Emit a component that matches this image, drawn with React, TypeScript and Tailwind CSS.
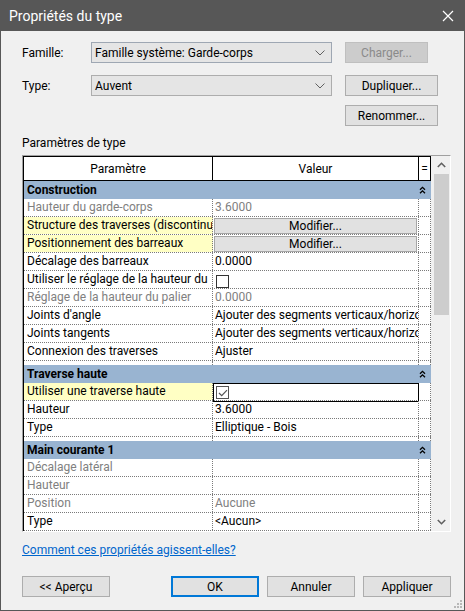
import React from "react";

type Kind = "text" | "button" | "check" | "checked";
type Row = { label: string; value?: string; kind?: Kind; gray?: boolean; yellow?: boolean };

const groups: { title: string; rows: Row[] }[] = [
  {
    title: "Construction",
    rows: [
      { label: "Hauteur du garde-corps", value: "3.6000", gray: true },
      { label: "Structure des traverses (discontinu", kind: "button", yellow: true },
      { label: "Positionnement des barreaux", kind: "button", yellow: true },
      { label: "Décalage des barreaux", value: "0.0000" },
      { label: "Utiliser le réglage de la hauteur du", kind: "check" },
      { label: "Réglage de la hauteur du palier", value: "0.0000", gray: true },
      { label: "Joints d'angle", value: "Ajouter des segments verticaux/horizontaux" },
      { label: "Joints tangents", value: "Ajouter des segments verticaux/horizontaux" },
      { label: "Connexion des traverses", value: "Ajuster" },
    ],
  },
  {
    title: "Traverse haute",
    rows: [
      { label: "Utiliser une traverse haute", kind: "checked", yellow: true },
      { label: "Hauteur", value: "3.6000" },
      { label: "Type", value: "Elliptique - Bois" },
    ],
  },
  {
    title: "Main courante 1",
    rows: [
      { label: "Décalage latéral", value: "", gray: true },
      { label: "Hauteur", value: "", gray: true },
      { label: "Position", value: "Aucune", gray: true },
      { label: "Type", value: "<Aucun>" },
    ],
  },
];

function DoubleUp() {
  return (
    <svg width="7" height="8" viewBox="0 0 7 8" className="shrink-0">
      <path d="M1 3.8 L3.5 1.3 L6 3.8" fill="none" stroke="#000" strokeWidth="1.3" />
      <path d="M1 7.3 L3.5 4.8 L6 7.3" fill="none" stroke="#000" strokeWidth="1.3" />
    </svg>
  );
}

function SelectChevron() {
  return (
    <svg width="10" height="6" viewBox="0 0 10 6">
      <path d="M0.5 0.5 L5 5 L9.5 0.5" fill="none" stroke="#606060" strokeWidth="1" />
    </svg>
  );
}

function Cells({ row }: { row: Row }) {
  const txt = row.gray ? "text-[#808080]" : "text-black";
  return (
    <>
      <div
        className={`w-[189px] shrink-0 border-r border-dotted border-[#7a7a7a] pl-[3px] overflow-hidden whitespace-nowrap ${
          row.yellow ? "bg-[#ffffc4]" : ""
        } ${txt}`}
      >
        {row.label}
      </div>
      <div className={`w-[206px] shrink-0 border-r border-dotted border-[#7a7a7a] overflow-hidden whitespace-nowrap ${txt}`}>
        {row.kind === "button" ? (
          <div className="mx-[1px] mt-[1px] h-[16px] border border-[#a6a6a6] bg-[#e1e1e1] flex items-center justify-center leading-none text-black">
            Modifier...
          </div>
        ) : row.kind === "check" ? (
          <div className="ml-[3px] mt-[4px] w-[13px] h-[13px] border border-[#333] bg-white" />
        ) : row.kind === "checked" ? (
          <div className="ml-[3px] mt-[3px] w-[13px] h-[13px] border border-[#555] bg-white flex items-center justify-center">
            <svg width="10" height="8" viewBox="0 0 10 8">
              <path d="M1 4 L3.7 6.6 L9 1.2" fill="none" stroke="#555" strokeWidth="1.2" />
            </svg>
          </div>
        ) : (
          <div className="pl-[2px]">{row.value}</div>
        )}
      </div>
      <div className="w-[12px] shrink-0 border-r border-dotted border-[#7a7a7a]" />
      {row.kind === "checked" && (
        <div className="absolute left-[189px] top-0 w-[206px] h-[19px] border-[1.5px] border-black pointer-events-none" />
      )}
    </>
  );
}

function GroupBar({ title }: { title: string }) {
  return (
    <div className="h-[18px] bg-[#99b4d1] flex items-center font-bold text-black pl-[3px] shrink-0">
      <div className="w-[392px] leading-[18px] whitespace-nowrap">{title}</div>
      <DoubleUp />
    </div>
  );
}

function Btn({ children, w, cls = "" }: { children: React.ReactNode; w: string; cls?: string }) {
  return (
    <div className={`${w} h-[21px] flex items-center justify-center border border-[#adadad] bg-[#e1e1e1] text-black ${cls}`}>
      {children}
    </div>
  );
}

export default function App() {
  return (
    <div className="w-[465px] h-[611px] border border-[#575757] bg-[#f0f0f0] flex flex-col text-[12px] font-['Roboto',sans-serif] text-black select-none overflow-hidden">
      {/* Title bar */}
      <div className="h-[30px] bg-[#575757] flex items-center justify-between pl-[8px] pr-[10px] shrink-0">
        <span className="text-white text-[14px] leading-none">Propriétés du type</span>
        <svg width="12" height="12" viewBox="0 0 12 12">
          <path d="M1 1 L11 11 M11 1 L1 11" stroke="#fff" strokeWidth="1.2" />
        </svg>
      </div>

      <div className="flex flex-col pl-[21px] pt-[11px]">
        {/* Famille */}
        <div className="flex items-center h-[21px]">
          <div className="w-[69px]">Famille:</div>
          <div className="w-[241px] h-[21px] border border-[#9ea7b3] bg-[#e5e5e5] flex items-center justify-between pl-[3px] pr-[6px]">
            <span>Famille système: Garde-corps</span>
            <SelectChevron />
          </div>
          <div className="ml-[13px] w-[83px] h-[21px] border border-[#bfbfbf] bg-[#cccccc] text-[#8a8a8a] flex items-center justify-center">
            Charger...
          </div>
        </div>
        {/* Type */}
        <div className="flex items-center h-[21px] mt-[12px]">
          <div className="w-[69px]">Type:</div>
          <div className="w-[241px] h-[21px] border border-[#adadad] bg-[#e5e5e5] flex items-center justify-between pl-[3px] pr-[6px]">
            <span>Auvent</span>
            <SelectChevron />
          </div>
          <Btn w="w-[93px]" cls="ml-[13px]">Dupliquer...</Btn>
        </div>
        <div className="flex h-[21px] mt-[9px] pl-[323px]">
          <Btn w="w-[93px]">Renommer...</Btn>
        </div>

        <div className="mt-[9px] h-[16px] leading-[16px]">Paramètres de type</div>

        {/* Table */}
        <div className="mt-[4px] w-[429px] h-[377px] border-t border-l border-[#a0a0a0] border-b border-r border-b-white border-r-white flex">
          <div className="w-[408px] h-[375px] bg-white border-l border-black flex flex-col overflow-hidden">
            {/* Header */}
            <div className="h-[25px] shrink-0 border-t border-b border-black flex">
              <div className="w-[189px] border-r border-black flex items-center justify-center">Paramètre</div>
              <div className="w-[206px] border-r border-black flex items-center justify-center">Valeur</div>
              <div className="w-[12px] border-r border-black flex items-center justify-center">=</div>
            </div>
            {groups.map((g, gi) => (
              <React.Fragment key={g.title}>
                {gi > 0 && (
                  <div className="h-[4px] shrink-0 flex">
                    <div className="w-[189px] border-r border-dotted border-[#7a7a7a]" />
                    <div className="w-[206px] border-r border-dotted border-[#7a7a7a]" />
                    <div className="w-[12px] border-r border-dotted border-[#7a7a7a]" />
                  </div>
                )}
                <GroupBar title={g.title} />
                {g.rows.map((r, ri) => (
                  <div key={ri} className="relative h-[18px] shrink-0 flex border-b border-dotted border-[#7a7a7a] leading-[17px]">
                    <Cells row={r} />
                  </div>
                ))}
              </React.Fragment>
            ))}
          </div>
          {/* Scrollbar */}
          <div className="w-[19px] h-[375px] bg-[#f0f0f0] flex flex-col items-center pl-[1px]">
            <div className="h-[18px] w-full flex items-center justify-center">
              <svg width="9" height="6" viewBox="0 0 9 6">
                <path d="M0.8 5 L4.5 1.3 L8.2 5" fill="none" stroke="#606060" strokeWidth="1.6" />
              </svg>
            </div>
            <div className="w-[15px] h-[141px] bg-[#cdcdcd]" />
            <div className="flex-1" />
            <div className="h-[18px] w-full flex items-center justify-center">
              <svg width="9" height="6" viewBox="0 0 9 6">
                <path d="M0.8 1 L4.5 4.7 L8.2 1" fill="none" stroke="#606060" strokeWidth="1.6" />
              </svg>
            </div>
          </div>
        </div>

        <div className="mt-[10px] h-[16px] leading-[16px]">
          <span className="text-[#0066cc] underline">Comment ces propriétés agissent-elles?</span>
        </div>

        <div className="mt-[18px] flex items-center">
          <Btn w="w-[88px]">&lt;&lt; Aperçu</Btn>
          <div className="w-[61px]" />
          <div className="w-[88px] h-[21px] flex items-center justify-center border-2 border-[#0078d7] bg-[#e1e1e1]">OK</div>
          <Btn w="w-[88px]" cls="ml-[8px]">Annuler</Btn>
          <Btn w="w-[88px]" cls="ml-[8px]">Appliquer</Btn>
        </div>
      </div>
      <div className="flex-1 flex items-end justify-end pr-[2px] pb-[2px]">
        <svg width="8" height="8" viewBox="0 0 8 8">
          <rect x="6" y="0" width="2" height="2" fill="#b8b8b8" />
          <rect x="3" y="3" width="2" height="2" fill="#b8b8b8" />
          <rect x="6" y="3" width="2" height="2" fill="#b8b8b8" />
          <rect x="0" y="6" width="2" height="2" fill="#b8b8b8" />
          <rect x="3" y="6" width="2" height="2" fill="#b8b8b8" />
          <rect x="6" y="6" width="2" height="2" fill="#b8b8b8" />
        </svg>
      </div>
    </div>
  );
}
